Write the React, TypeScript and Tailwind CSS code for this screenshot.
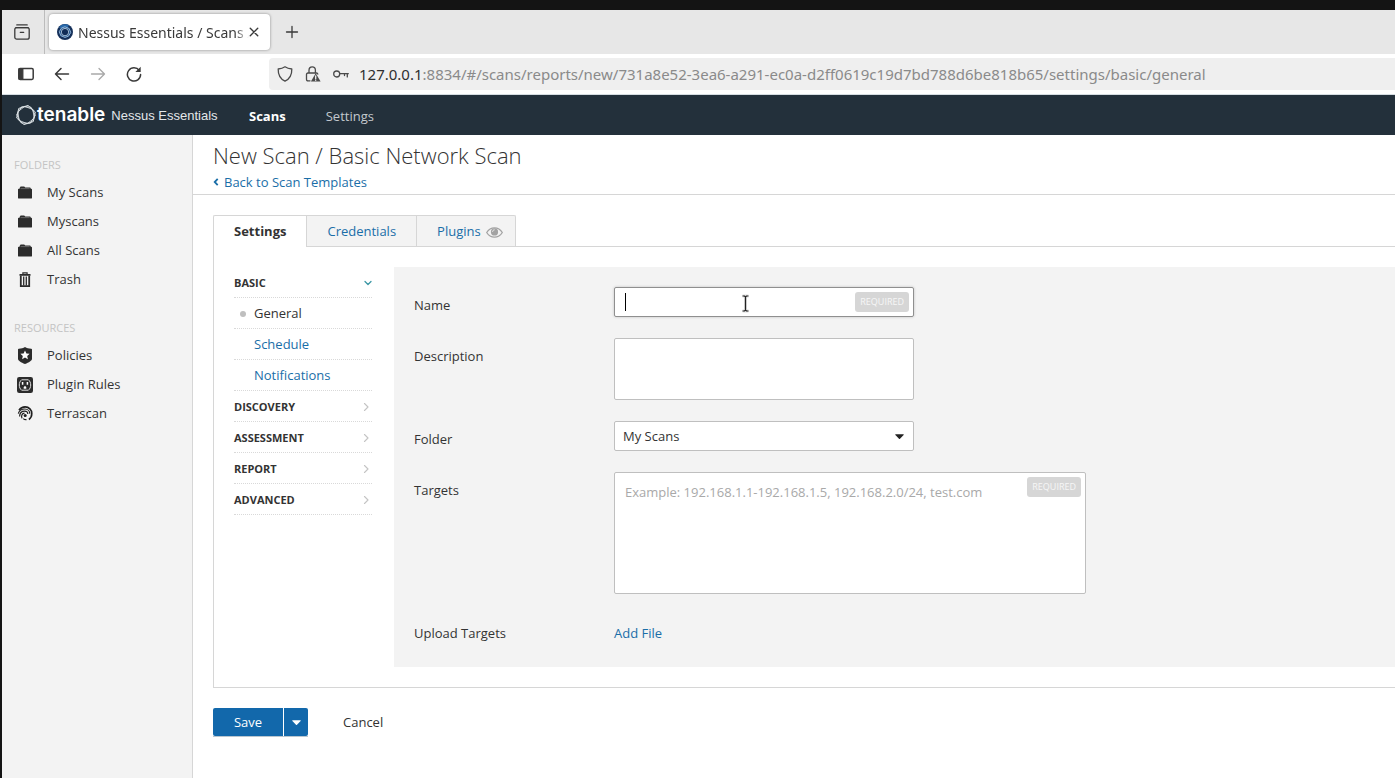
import React from "react";

const FolderIcon = () => (
  <svg viewBox="0 0 14 13" className="h-[13px] w-[14px]" fill="#2c2c2c" aria-hidden="true">
    <path d="M1.600 2 2.600.500h3.600l1 1h4.600c.6 0 .9.3.9.800v.500h.500c.5 0 .8.300.8.800v8.100c0 .6-.3.900-.9.900H.9c-.6 0-.9-.3-.9-.9V3.600c0-.5.300-.8.800-.8h.8z" />
    <path d="M2.600 2.600h9" stroke="#8a8a8a" strokeWidth=".6" />
  </svg>
);

const TrashIcon = () => (
  <svg viewBox="0 0 12 15" className="h-[15px] w-3" fill="none" stroke="#2c2c2c" aria-hidden="true">
    <path d="M.5 2.900h11" strokeWidth="1.800" />
    <path d="M3.900 2.400V.8h4.200v1.600" strokeWidth="1.200" />
    <path d="M1.800 3.800v10.300h8.400V3.800" strokeWidth="1.800" />
    <path d="M4.700 4.600v9M7.300 4.600v9" strokeWidth="1.300" />
  </svg>
);

const PolicyIcon = () => (
  <svg viewBox="0 0 14 17" className="h-[17px] w-[14px]" aria-hidden="true">
    <path
      fill="#2c2c2c"
      d="M7 0c1.600 1.100 3.800 1.700 6.200 1.700.5 0 .8.300.8.800v9.200c0 1.900-3 3.800-7 5.300-4-1.500-7-3.400-7-5.300V2.500c0-.5.300-.8.800-.8C3.200 1.700 5.400 1.100 7 0z"
    />
    <path fill="#fff" d="m7 3.500 1.400 3 3.200.300-2.400 2.200.7 3.200L7 10.600l-2.900 1.600.7-3.200-2.400-2.200 3.200-.3z" />
  </svg>
);

const PluginIcon = () => (
  <svg viewBox="0 0 16 16" className="size-4" aria-hidden="true">
    <rect width="16" height="16" rx="2.200" fill="#2c2c2c" />
    <path
      d="M4.600 2.800h6.800C12.900 4 13.700 5.800 13.700 8s-.8 4-2.300 5.200H4.600C3.100 12 2.300 10.200 2.300 8s.8-4 2.300-5.200z"
      fill="none"
      stroke="#ddd"
      strokeWidth="1"
    />
    <path d="M5.600 5v2.800M10.400 5v2.800" stroke="#fff" strokeWidth="1.500" />
    <path d="M6.700 11.700V10.400c0-1.700 2.600-1.700 2.600 0v1.300z" fill="#fff" />
  </svg>
);

const TerrascanIcon = () => (
  <svg
    viewBox="0 0 16 15"
    className="h-[15px] w-4"
    fill="none"
    stroke="#1f1f1f"
    strokeWidth="1.200"
    aria-hidden="true"
  >
    <path d="M2 4.200C3.500 2 5.700.9 8.100.9c3.900 0 6.700 2.900 6.700 6.600 0 2.600-1 4.600-2.900 6" strokeWidth="1.600" />
    <path d="M1.300 7.600c.9-2.900 3.400-4.600 6.500-4.600 2.900 0 5 2.100 5 4.800" />
    <path d="M2.600 10.400C2.700 7.200 4.800 5.100 7.600 5.100c1.900 0 3.200 1.200 3.200 2.900" />
    <path d="M5 12.400C3.900 9.600 5.100 7.400 7.500 7.200" />
    <path d="M6.300 12.600c.8.800 2 1.200 3.200 1" />
    <circle cx="8.200" cy="9.400" r="1.500" fill="#1f1f1f" stroke="none" />
  </svg>
);

const EyeIcon = () => (
  <svg viewBox="0 0 17 11" className="h-[11px] w-[17px]" aria-hidden="true">
    <path
      d="M.7 5.500C2.600 2.400 5.300.8 8.500.8s5.900 1.600 7.800 4.700c-1.900 3.100-4.600 4.700-7.800 4.700S2.600 8.600.7 5.500z"
      fill="none"
      stroke="#a3a3a3"
      strokeWidth="1.300"
    />
    <circle cx="8.500" cy="4.900" r="3.600" fill="#a3a3a3" />
    <path d="M6.600 4.800c0-1.200.8-2 2-2" stroke="#f3f3f3" strokeWidth=".9" fill="none" />
  </svg>
);

const TenableMark = () => (
  <svg viewBox="0 0 22 22" className="size-[22px]" fill="none" stroke="#dfe5e8" strokeLinejoin="round" aria-hidden="true">
    <path d="M11 1.200 19.500 6.100v9.800L11 20.800 2.500 15.900V6.100z" strokeWidth=".9" transform="rotate(12 11 11)" />
    <path d="M11 1.700 19.100 6.300v9.400L11 20.300 2.900 15.700V6.300z" strokeWidth=".8" transform="rotate(32 11 11)" />
    <path d="M11 2.200 18.600 6.600v8.800L11 19.800 3.400 15.400V6.600z" strokeWidth=".8" transform="rotate(-8 11 11)" />
  </svg>
);

const Favicon = () => (
  <svg viewBox="0 0 16 16" className="size-4 shrink-0" aria-hidden="true">
    <circle cx="8" cy="8" r="8" fill="#15305a" />
    <path d="M2 3.500A7.500 7.500 0 0 1 12 1.200L9 6z" fill="#2767a8" />
    <path d="m8 2.800 4.200 1.700 1.500 4-2.200 3.700L8 13.400l-4.200-1.700-1.500-4L4.500 4z" fill="#1b4b83" stroke="#91b7dc" strokeWidth="1" />
    <circle cx="8" cy="8.100" r="3.700" fill="#102c57" stroke="#c8dcee" strokeWidth=".8" />
  </svg>
);

const Line = ({ className = "size-4", children }: { className?: string; children: React.ReactNode }) => (
  <svg
    viewBox="0 0 16 16"
    className={className}
    fill="none"
    stroke="currentColor"
    strokeWidth="1.300"
    strokeLinecap="round"
    strokeLinejoin="round"
    aria-hidden="true"
  >
    {children}
  </svg>
);

const Caret = () => (
  <svg viewBox="0 0 9 5" className="h-[5px] w-[9px]" fill="currentColor" aria-hidden="true">
    <path d="M.8.200h7.400c.5 0 .7.400.4.800L5 4.700c-.3.300-.7.300-1 0L.400 1C.100.600.300.200.800.200z" />
  </svg>
);

const Required = () => (
  <span className="pointer-events-none absolute top-[5px] right-[5px] rounded-[3px] bg-[#d6d6d6] px-[5px] text-[9px] leading-5 text-[#f7f7f7]">
    REQUIRED
  </span>
);

function BrowserChrome() {
  return (
    <div className="font-['Noto_Sans',sans-serif] text-[#3a3a3a]">
      <div className="flex h-11 items-center bg-[#e7e7e7]">
        <div className="flex h-full w-[43px] items-center border-r border-[#bcbcbc] pl-3">
          <button type="button" aria-label="Recent browsing">
            <Line>
              <path d="M2.800.9h10.400M1.900 3.600h12.200" />
              <rect x=".8" y="3.600" width="14.400" height="11.600" rx="2" />
              <path d="M6.300 8.300h3.400" />
            </Line>
          </button>
        </div>
        <div className="ml-1 flex h-9 w-[221px] items-center rounded-[4px] bg-white pl-2 shadow-[0_0_3px_rgba(0,0,0,0.4)]">
          <Favicon />
          <span className="ml-[5px] w-[171px] shrink-0 mask-r-from-92% text-[14px] whitespace-nowrap">
            Nessus Essentials / Scans /
          </span>
          <button type="button" aria-label="Close tab">
            <Line className="size-[10px]">
              <path d="m2 2 12 12M14 2 2 14" strokeWidth="2.200" />
            </Line>
          </button>
        </div>
        <button type="button" aria-label="New tab" className="ml-[14px]">
          <Line>
            <path d="M8 2.500v11M2.500 8h11" />
          </Line>
        </button>
      </div>
      <div className="flex h-[41px] items-center border-b border-[#d5dde2] bg-white pl-4">
        <div className="flex w-[251px] items-center gap-5">
          <button type="button" aria-label="Sidebar">
            <Line>
              <rect x=".8" y="2.600" width="14.400" height="10.800" rx="1.300" strokeWidth="1.500" />
              <path d="M1 3h3.800v10H1z" fill="currentColor" />
            </Line>
          </button>
          <button type="button" aria-label="Back">
            <Line>
              <path d="M1.500 8h13M7 2.500 1.500 8 7 13.500" strokeWidth="1.500" />
            </Line>
          </button>
          <button type="button" aria-label="Forward" className="text-[#a9a9a9]">
            <Line>
              <path d="M1.500 8h13M9 2.500 14.500 8 9 13.500" />
            </Line>
          </button>
          <button type="button" aria-label="Reload">
            <Line>
              <path d="M13.300 4.500A6.600 6.600 0 1 0 14.600 8.500" strokeWidth="1.500" />
              <path d="M14.700.8v5.300H9.400z" fill="currentColor" stroke="none" />
            </Line>
          </button>
        </div>
        <div className="flex h-8 flex-1 items-center rounded-l-[4px] bg-[#efefef] pl-2 text-[#4a4a4a]">
          <Line>
            <path d="M8 .8c2 1.400 4.200 2 6.800 2.200.2 5.700-1.800 9.700-6.800 12.200C3 12.700 1 8.700 1.200 3 3.800 2.800 6 2.200 8 .8z" />
          </Line>
          <Line className="ml-3 size-4">
            <path d="M4 7V4.200C4 2 5.300.8 7.200.8s3.200 1.200 3.200 3.400V7M5 14.800H3c-1 0-1.500-.5-1.500-1.500V8.500C1.500 7.500 2 7 3 7h8.400c.8 0 1.300.4 1.400 1" />
            <path d="M10.700 7.200 15.600 15.600H5.900z" fill="currentColor" stroke="none" />
            <path d="M10.700 10v2.700M10.700 14.100v.2" stroke="#efefef" />
          </Line>
          <Line className="ml-3 size-4">
            <circle cx="3.700" cy="8" r="3" />
            <path d="M6.900 7.700h8.400M14.300 7.900v3M11.500 7.900v1.600" />
          </Line>
          <span className="ml-[10px] text-[15px] leading-5 whitespace-nowrap text-[#8a8a8a]">
            <span className="text-[#303030]">127.0.0.1</span>
            :8834/#/scans/reports/new/731a8e52-3ea6-a291-ec0a-d2ff0619c19d7bd788d6be818b65/settings/basic/general
          </span>
        </div>
      </div>
    </div>
  );
}

type SideItem = { label: string; Icon: () => React.JSX.Element };

const folders: SideItem[] = [
  { label: "My Scans", Icon: FolderIcon },
  { label: "Myscans", Icon: FolderIcon },
  { label: "All Scans", Icon: FolderIcon },
  { label: "Trash", Icon: TrashIcon },
];

const resources: SideItem[] = [
  { label: "Policies", Icon: PolicyIcon },
  { label: "Plugin Rules", Icon: PluginIcon },
  { label: "Terrascan", Icon: TerrascanIcon },
];

function SideGroup({ title, items }: { title: string; items: SideItem[] }) {
  return (
    <section>
      <h2 className="mb-[3px] pl-3 text-[11px] leading-5 text-[#c4c4c4]">{title}</h2>
      <ul>
        {items.map(({ label, Icon }) => (
          <li key={label}>
            <a href="#" className="flex h-[29px] items-center">
              <span className="flex w-[45px] justify-center">
                <Icon />
              </span>
              {label}
            </a>
          </li>
        ))}
      </ul>
    </section>
  );
}

const sections = ["DISCOVERY", "ASSESSMENT", "REPORT", "ADVANCED"];
const rowLine = "flex h-[31px] items-center border-b border-dotted border-[#d9d9d9] pt-[2px]";

function SettingsNav() {
  return (
    <nav className="w-[138px] shrink-0">
      <button type="button" className={`${rowLine} w-full justify-between text-[11px] font-bold`}>
        BASIC
        <Line className="size-2 text-[#3c97a5]">
          <path d="m2 5 6 6 6-6" strokeWidth="2.600" />
        </Line>
      </button>
      <a href="#" className={`${rowLine} pl-[6px]`}>
        <span className="mr-2 size-[6px] rounded-full bg-[#bfbfbf]" />
        General
      </a>
      <a href="#" className={`${rowLine} pl-5 text-[#1a6ea8]`}>
        Schedule
      </a>
      <a href="#" className={`${rowLine} pl-5 text-[#1a6ea8]`}>
        Notifications
      </a>
      {sections.map((name) => (
        <button key={name} type="button" className={`${rowLine} w-full justify-between text-[11px] font-bold`}>
          {name}
          <Line className="mr-[2px] size-2 text-[#c4c4c4]">
            <path d="m5 1 7 7-7 7" strokeWidth="2.200" />
          </Line>
        </button>
      ))}
    </nav>
  );
}

const label = "w-[200px] shrink-0 pt-2 leading-5";
const field = "block w-full resize-none rounded-[2px] border border-[#bfbfbf] bg-white outline-none";

function ScanForm() {
  return (
    <div className="flex min-w-0 flex-1 flex-col gap-[21px] bg-[#f3f3f3] p-5">
      <div className="flex">
        <label htmlFor="name" className={label}>
          Name
        </label>
        <div className="relative w-[300px]">
          <input
            id="name"
            type="text"
            className="block h-[30px] w-full rounded-[2px] border border-[#8f8f8f] bg-white px-[10px] shadow-[0_0_3px_rgba(0,0,0,0.2)] outline-none"
          />
          <span className="pointer-events-none absolute top-[6px] left-[11px] h-[18px] w-px bg-black" />
          <svg
            viewBox="0 0 9 19"
            className="pointer-events-none absolute top-[7px] left-[127px] h-[19px] w-[9px]"
            fill="none"
            aria-hidden="true"
          >
            <path d="M1.500 2h2l1 1 1-1h2M4.500 3v13M1.500 17h2l1-1 1 1h2" stroke="#ddd" strokeWidth="3" />
            <path d="M1.500 2h2l1 1 1-1h2M4.500 3v13M1.500 17h2l1-1 1 1h2" stroke="#222" strokeWidth="1.200" />
          </svg>
          <Required />
        </div>
      </div>
      <div className="flex">
        <label htmlFor="description" className={label}>
          Description
        </label>
        <div className="w-[300px]">
          <textarea id="description" className={`${field} h-[62px] px-[10px] py-2`} />
        </div>
      </div>
      <div className="flex">
        <label htmlFor="folder" className={label}>
          Folder
        </label>
        <div className="relative w-[300px]">
          <select id="folder" className={`${field} h-[30px] appearance-none px-2 pt-[2px]`} defaultValue="My Scans">
            <option>My Scans</option>
            <option>Myscans</option>
          </select>
          <span className="pointer-events-none absolute top-[13px] right-[10px] text-[#222]">
            <Caret />
          </span>
        </div>
      </div>
      <div className="flex">
        <label htmlFor="targets" className={label}>
          Targets
        </label>
        <div className="relative w-[472px]">
          <textarea
            id="targets"
            placeholder="Example: 192.168.1.1-192.168.1.5, 192.168.2.0/24, test.com"
            className={`${field} h-[122px] px-[10px] py-[9px] leading-5 placeholder:text-[#a9a9a9]`}
          />
          <Required />
        </div>
      </div>
      <div className="flex h-8">
        <span className={label}>Upload Targets</span>
        <a href="#" className="pt-2 leading-5 text-[#1a6ea8]">
          Add File
        </a>
      </div>
    </div>
  );
}

export default function App() {
  return (
    <div className="flex min-h-screen flex-col overflow-hidden border-t-10 border-l-2 border-[#141414] bg-white font-['Open_Sans',sans-serif] text-[13px] text-[#333]">
      <BrowserChrome />
      <header className="flex h-10 items-center bg-[#23303b] text-white">
        <div className="flex w-[247px] items-center pl-[13px]">
          <TenableMark />
          <span className="font-['Inter',sans-serif] text-[19px] leading-6 font-semibold">tenable</span>
          <span className="ml-[6px] pt-[2px] font-['Liberation_Sans',sans-serif] text-[13px] leading-6 text-[#e3e7ea]">
            Nessus Essentials
          </span>
        </div>
        <nav className="flex items-center gap-10 pt-[3px]">
          <a href="#" className="font-bold">
            Scans
          </a>
          <a href="#" className="text-[#c3c9ce]">
            Settings
          </a>
        </nav>
      </header>
      <div className="flex flex-1">
        <aside className="flex w-[191px] shrink-0 flex-col gap-6 border-r border-[#d6d6d6] bg-[#f3f3f3] pt-5">
          <SideGroup title="FOLDERS" items={folders} />
          <SideGroup title="RESOURCES" items={resources} />
        </aside>
        <main className="min-w-0 flex-1">
          <div className="h-[60px] border-b border-[#d6d6d6] pt-1 pl-5">
            <h1 className="pb-[2px] text-[22px] leading-8 font-light">New Scan / Basic Network Scan</h1>
            <a href="#" className="flex items-center gap-[5px] leading-[18px] text-[#1a6ea8]">
              <svg viewBox="0 0 6 8" className="h-2 w-[6px]" fill="none" stroke="currentColor" strokeWidth="1.800" aria-hidden="true">
                <path d="M4.700.9 1.700 4l3 3.100" />
              </svg>
              Back to Scan Templates
            </a>
          </div>
          <div className="pt-5 pl-5">
            <div role="tablist" className="flex">
              <button
                type="button"
                role="tab"
                aria-selected="true"
                className="relative z-10 -mb-px h-8 rounded-tl-[2px] border-t border-l border-[#d6d6d6] bg-white px-5 font-bold"
              >
                Settings
              </button>
              <button
                type="button"
                role="tab"
                aria-selected="false"
                className="h-[31px] border-t border-l border-[#d6d6d6] bg-[#f3f3f3] px-5 pt-[2px] text-[#1a6ea8]"
              >
                Credentials
              </button>
              <button
                type="button"
                role="tab"
                aria-selected="false"
                className="flex h-[31px] items-center gap-[5px] rounded-tr-[2px] border-t border-r border-l border-[#d6d6d6] bg-[#f3f3f3] pt-[2px] pr-3 pl-5 text-[#1a6ea8]"
              >
                Plugins
                <EyeIcon />
              </button>
            </div>
            <div className="flex gap-[22px] border-y border-l border-[#d6d6d6] py-5 pl-5">
              <SettingsNav />
              <ScanForm />
            </div>
          </div>
          <div className="flex items-center pt-5 pl-5">
            <div className="flex gap-px shadow-[0_1px_0_#b9c6d0]">
              <button type="button" className="h-7 w-[70px] rounded-l-[2px] bg-[#1268ab] pt-[2px] text-white">
                Save
              </button>
              <button
                type="button"
                aria-label="More save options"
                className="flex h-7 w-6 items-center justify-center rounded-r-[2px] bg-[#1268ab] text-white"
              >
                <Caret />
              </button>
            </div>
            <button type="button" className="ml-[35px] pt-[2px]">
              Cancel
            </button>
          </div>
        </main>
      </div>
    </div>
  );
}
